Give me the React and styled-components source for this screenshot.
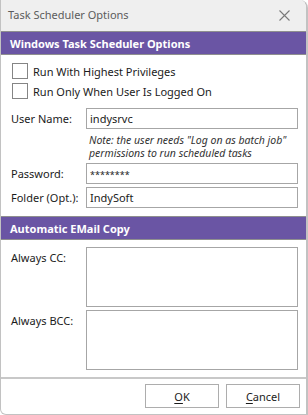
import React from "react";
import styled, { createGlobalStyle } from "styled-components";

const GlobalStyle = createGlobalStyle`
  html, body {
    margin: 0;
    padding: 0;
    background: #ffffff;
  }
  * {
    box-sizing: border-box;
  }
`;

const App = () => {
  return (
    <>
      <GlobalStyle />
      <Window>
        <TitleBar>
          <Title>Task Scheduler Options</Title>
          <CloseButton aria-label="Close">
            <svg width="11" height="11" viewBox="0 0 11 11">
              <path d="M0.5 0.5 L10.5 10.5 M10.5 0.5 L0.5 10.5" stroke="#7a7a7a" strokeWidth="1.1" fill="none" />
            </svg>
          </CloseButton>
        </TitleBar>

        <Body>
          <SectionHeader>Windows Task Scheduler Options</SectionHeader>
          <Section $pad="6px 8px 8px 10px">
            <CheckRow>
              <CheckBox />
              <CheckLabel>Run With Highest Privileges</CheckLabel>
            </CheckRow>
            <CheckRow>
              <CheckBox />
              <CheckLabel>Run Only When User Is Logged On</CheckLabel>
            </CheckRow>

            <FormGrid $top={7}>
              <FieldLabel>User Name:</FieldLabel>
              <Field>indysrvc</Field>
              <span />
              <Note>
                Note: the user needs "Log on as batch job"
                <br />
                permissions to run scheduled tasks
              </Note>
              <FieldLabel>Password:</FieldLabel>
              <Field $masked>********</Field>
              <FieldLabel>Folder (Opt.):</FieldLabel>
              <Field>IndySoft</Field>
            </FormGrid>
          </Section>

          <SectionHeader>Automatic EMail Copy</SectionHeader>
          <Section $pad="7px 8px 6px 10px">
            <FormGrid $top={0}>
              <FieldLabel $alignTop>Always CC:</FieldLabel>
              <MemoBox $height={60} />
              <FieldLabel $alignTop>Always BCC:</FieldLabel>
              <MemoBox $height={60} />
            </FormGrid>
          </Section>
        </Body>

        <Footer>
          <Button>
            <u>O</u>K
          </Button>
          <Button>
            <u>C</u>ancel
          </Button>
        </Footer>
      </Window>
    </>
  );
};

const Window = styled.div`
  width: 308px;
  height: 415px;
  display: flex;
  flex-direction: column;
  background: #ffffff;
  border: 1px solid #c2c2c2;
  border-top: none;
  border-right-width: 2px;
  border-top-right-radius: 8px;
  border-bottom-left-radius: 6px;
  overflow: hidden;
  font-family: "Noto Sans", "Open Sans", sans-serif;
  font-size: 11px;
  color: #1b1b1b;
`;

const TitleBar = styled.div`
  height: 31px;
  flex: none;
  display: flex;
  align-items: center;
  justify-content: space-between;
  padding: 0 16px 3px 7px;
  background: #efefef;
`;

const Title = styled.span`
  font-size: 11px;
  color: #5c5c5c;
`;

const CloseButton = styled.span`
  display: flex;
  align-items: center;
  margin-top: 2px;
`;

const Body = styled.div`
  flex: 1;
  display: flex;
  flex-direction: column;
  border-bottom: 2px solid #c8c8c8;
`;

const SectionHeader = styled.div`
  height: 24px;
  display: flex;
  align-items: center;
  padding-left: 9px;
  background: #6a55a4;
  border-top: 1px solid #8f8f8f;
  border-bottom: 1px solid #8f8f8f;
  color: #ffffff;
  font-weight: 700;
  font-size: 11px;
`;

const Section = styled.div`
  padding: ${(p) => p.$pad};
`;

const CheckRow = styled.div`
  height: 20px;
  display: flex;
  align-items: center;
  gap: 5px;
`;

const CheckBox = styled.span`
  width: 16px;
  height: 16px;
  margin-left: 1px;
  border: 1px solid #858585;
  background: #ffffff;
`;

const CheckLabel = styled.span`
  color: #1b1b1b;
`;

const FormGrid = styled.div`
  display: grid;
  grid-template-columns: 75px 1fr;
  row-gap: 3px;
  margin-top: ${(p) => p.$top}px;
  align-items: center;
`;

const FieldLabel = styled.span`
  align-self: ${(p) => (p.$alignTop ? "start" : "center")};
  padding-top: ${(p) => (p.$alignTop ? "3px" : "0")};
`;

const Field = styled.div`
  height: 21px;
  display: flex;
  align-items: ${(p) => (p.$masked ? "flex-start" : "center")};
  padding: ${(p) => (p.$masked ? "4px 3px 0" : "0 3px")};
  border: 1px solid #a6a6a6;
  background: #ffffff;
  font-size: ${(p) => (p.$masked ? "9px" : "11px")};
  color: #1b1b1b;
`;

const Note = styled.div`
  font-style: italic;
  font-size: 10.5px;
  line-height: 13px;
  color: #333333;
  padding: 2px 0 0 3px;
`;

const MemoBox = styled.div`
  height: ${(p) => p.$height}px;
  border: 1px solid #a6a6a6;
  background: #ffffff;
`;

const Footer = styled.div`
  flex: none;
  height: 35px;
  display: flex;
  justify-content: flex-end;
  align-items: flex-start;
  gap: 7px;
  padding: 5px 6px 0 0;
`;

const Button = styled.div`
  width: 74px;
  height: 24px;
  display: flex;
  align-items: center;
  justify-content: center;
  border: 1px solid #adadad;
  background: #ffffff;
  color: #1b1b1b;
  font-size: 11px;

  u {
    text-decoration-thickness: 1px;
    text-underline-offset: 2px;
  }
`;

export default App;
